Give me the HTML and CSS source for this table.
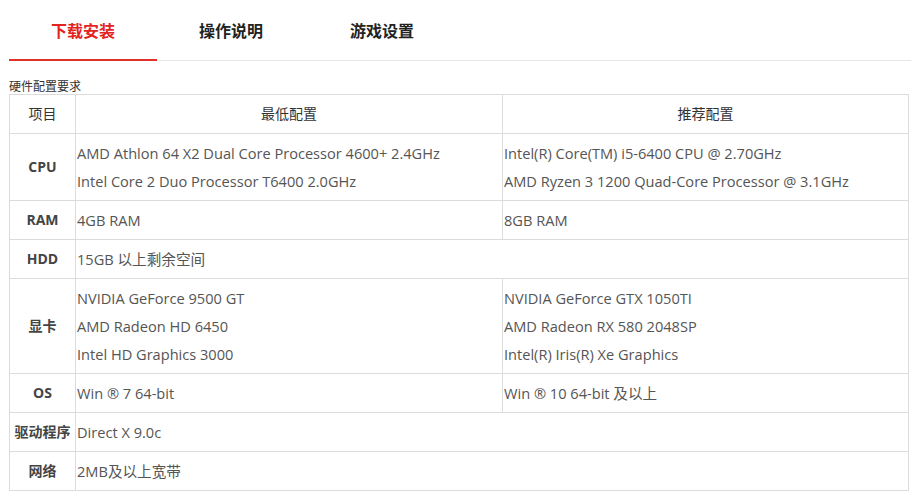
FILE: index.html
```html
<!DOCTYPE html>
<html lang="zh-CN">
<head>
<meta charset="utf-8">
<link rel="stylesheet" href="styles.css">
</head>
<body>
<div class="page">
  <div class="tabs">
    <div class="tab active">下载安装</div>
    <div class="tab">操作说明</div>
    <div class="tab wide">游戏设置</div>
  </div>
  <div class="caption">硬件配置要求</div>
  <table class="spec">
    <colgroup><col class="c1"><col class="c2"><col class="c3"></colgroup>
    <tr class="head"><th>项目</th><th>最低配置</th><th>推荐配置</th></tr>
    <tr><th>CPU</th><td>AMD Athlon 64 X2 Dual Core Processor 4600+ 2.4GHz<br>Intel Core 2 Duo Processor T6400 2.0GHz</td><td>Intel(R) Core(TM) i5-6400 CPU @ 2.70GHz<br>AMD Ryzen 3 1200 Quad-Core Processor @ 3.1GHz</td></tr>
    <tr><th>RAM</th><td>4GB RAM</td><td>8GB RAM</td></tr>
    <tr><th>HDD</th><td colspan="2">15GB 以上剩余空间</td></tr>
    <tr><th>显卡</th><td>NVIDIA GeForce 9500 GT<br>AMD Radeon HD 6450<br>Intel HD Graphics 3000</td><td>NVIDIA GeForce GTX 1050TI<br>AMD Radeon RX 580 2048SP<br>Intel(R) Iris(R) Xe Graphics</td></tr>
    <tr><th>OS</th><td>Win ® 7 64-bit</td><td>Win ® 10 64-bit 及以上</td></tr>
    <tr><th>驱动程序</th><td colspan="2">Direct X 9.0c</td></tr>
    <tr><th>网络</th><td colspan="2">2MB及以上宽带</td></tr>
  </table>
</div>
</body>
</html>
```
FILE: styles.css
```css
html, body { margin: 0; padding: 0; background: #fff; }
body {
  font-family: "Open Sans", "Noto Sans CJK SC", sans-serif;
  color: #555;
}
.page { padding-left: 9px; }
.tabs {
  display: flex;
  height: 60px;
  border-bottom: 1px solid #e6e6e6;
}
.tab {
  width: 148px;
  display: flex;
  align-items: center;
  justify-content: center;
  font-family: "Noto Sans CJK SC", sans-serif;
  font-size: 16px;
  font-weight: bold;
  color: #222;
  box-sizing: border-box;
}
.tab.wide { width: 154px; }
.tab.active {
  color: #e3231e;
  border-bottom: 2px solid #e0322b;
  margin-bottom: -1px;
}
.caption {
  font-family: "Noto Sans CJK SC", sans-serif;
  font-size: 12px;
  color: #333;
  margin-top: 16px;
  line-height: 17px;
}
.spec {
  border-collapse: collapse;
  width: 900px;
  font-size: 14.6px;
}
.spec col.c1 { width: 66px; }
.spec col.c2 { width: 427px; }
.spec th, .spec td {
  border: 1px solid #dcdcdc;
  padding: 5px 1px;
  line-height: 28px;
  text-align: left;
}
.spec th {
  text-align: center;
  color: #444;
  font-size: 14px;
  font-weight: bold;
  font-family: "Open Sans", "Noto Sans CJK SC", sans-serif;
}
.spec tr.head th { font-weight: normal; color: #333; }
```
